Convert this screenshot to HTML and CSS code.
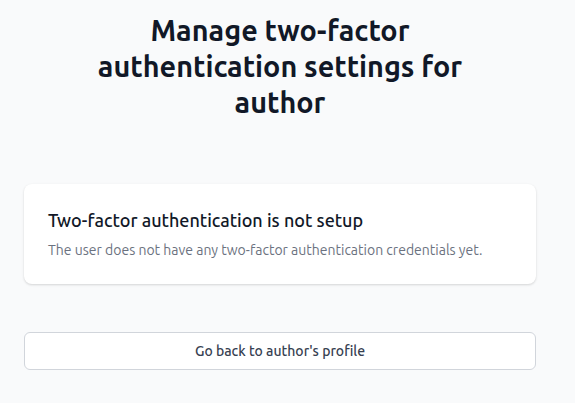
FILE: index.html
```html
<!DOCTYPE html>
<html>
<head>
<meta charset="utf-8">
<link rel="stylesheet" href="styles.css">
</head>
<body>
<main class="page">
  <h1 class="title">Manage two-factor authentication settings for author</h1>
  <section class="card">
    <h2 class="card-title">Two-factor authentication is not setup</h2>
    <p class="card-text">The user does not have any two-factor authentication credentials yet.</p>
  </section>
  <a class="btn" href="#">Go back to author's profile</a>
</main>
</body>
</html>
```
FILE: styles.css
```css
html, body {
  margin: 0;
  padding: 0;
  background: #f9fafb;
}
body {
  font-family: Ubuntu, "Noto Sans", "Open Sans", sans-serif;
  color: #111827;
}
.page {
  width: 512px;
  margin-left: 24px;
  padding-top: 12px;
  display: flex;
  flex-direction: column;
}
.title {
  margin: 0 auto;
  max-width: 448px;
  text-align: center;
  font-size: 28.8px;
  line-height: 36px;
  font-weight: 700;
  color: #111827;
}
.card {
  margin-top: 64px;
  background: #fff;
  border-radius: 8px;
  box-shadow: 0 1px 3px rgba(0,0,0,0.1), 0 1px 2px rgba(0,0,0,0.06);
  padding: 24px;
}
.card-title {
  margin: 0;
  font-size: 18px;
  line-height: 24px;
  font-weight: 500;
  color: #111827;
}
.card-text {
  margin: 8px 0 0;
  font-size: 14px;
  line-height: 20px;
  color: #6b7280;
}
.btn {
  margin-top: 48px;
  display: flex;
  justify-content: center;
  align-items: center;
  height: 36px;
  background: #fff;
  border: 1px solid #d1d5db;
  border-radius: 6px;
  font-size: 14px;
  font-weight: 500;
  color: #374151;
  text-decoration: none;
}
```
